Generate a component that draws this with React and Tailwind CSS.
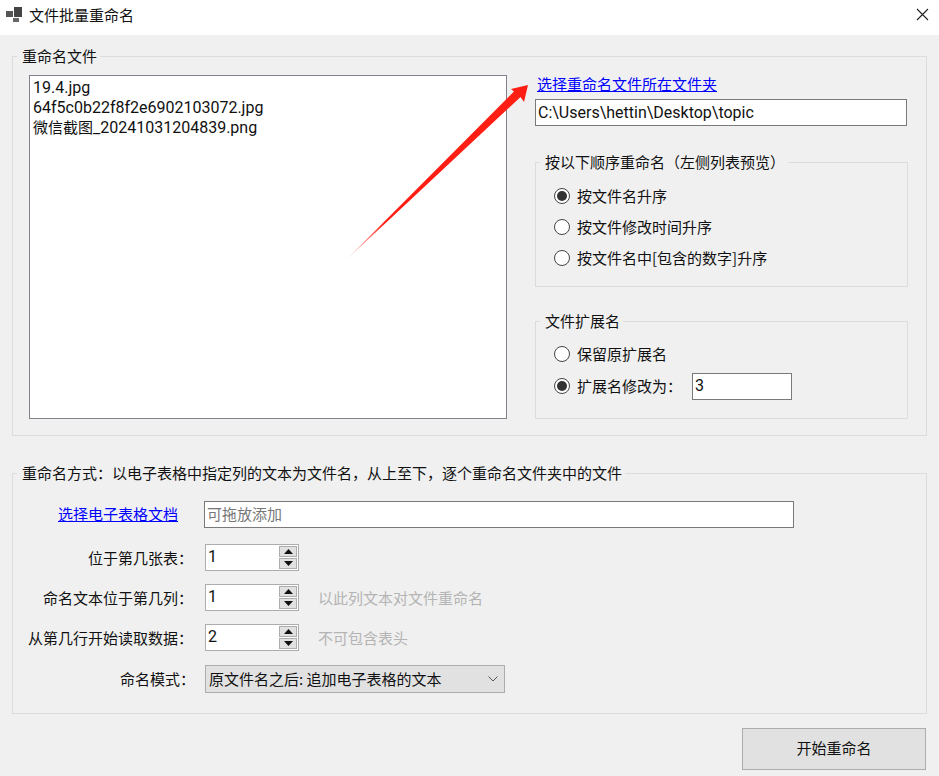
import React from 'react';

const FONT = '"Noto Sans CJK SC", sans-serif';
const LATIN = '"Roboto", "Noto Sans CJK SC", sans-serif';

const GroupBox = ({ title, className, children }) => (
  <div className={`relative border border-[#dcdcdc] ${className}`}>
    <span className="absolute left-[4px] top-[-11px] h-[20px] bg-[#f0f0f0] pl-[5px] pr-[3px] text-[15px] leading-[20px] text-[#111]">
      {title}
    </span>
    {children}
  </div>
);

const Radio = ({ label, checked }) => (
  <div className="flex h-[20px] items-center gap-[7px]">
    <span className="flex h-[16px] w-[16px] items-center justify-center rounded-full border border-[#444] bg-white">
      {checked && <span className="h-[10px] w-[10px] rounded-full bg-[#333]" />}
    </span>
    <span className="text-[15px] leading-[20px] text-[#111]">{label}</span>
  </div>
);

const SpinButton = ({ up }) => (
  <span className="flex h-[11px] w-[18px] items-center justify-center border border-[#adadad] bg-[#e1e1e1]">
    <svg width="9" height="5" viewBox="0 0 9 5">
      <path d={up ? 'M4.5 0L9 5H0Z' : 'M0 0H9L4.5 5Z'} fill="#111" />
    </svg>
  </span>
);

const Row = ({ label, value, hint, className }) => (
  <div className={`flex items-center ${className}`}>
    <span className="w-[180px] text-right text-[15px] leading-[20px] text-[#111]">{label}</span>
    <div className="ml-[12px] flex h-[27px] w-[94px] items-center justify-between border border-[#adadad] bg-white pl-[2px] pr-[1px]">
      <span className="pb-[2px] text-[16px] leading-[20px] text-[#111]" style={{ fontFamily: LATIN }}>{value}</span>
      <span className="flex flex-col gap-[1px]">
        <SpinButton up />
        <SpinButton />
      </span>
    </div>
    {hint && <span className="ml-[19px] text-[15px] leading-[20px] text-[#b4b4b4]">{hint}</span>}
  </div>
);

const App = () => {
  return (
    <div className="relative flex h-[776px] w-[939px] flex-col overflow-hidden bg-[#f0f0f0]" style={{ fontFamily: FONT }}>
      {/* Title bar */}
      <div className="flex h-[35px] shrink-0 items-center bg-white pb-[6px] pl-[6px] pr-[10px]">
        <svg width="17" height="15" viewBox="0 0 17 15">
          <rect x="8" y="0" width="8" height="10" fill="#444" />
          <rect x="0" y="4" width="7" height="6" fill="#555" />
          <rect x="7" y="11" width="6" height="4" fill="#666" />
        </svg>
        <span className="ml-[6px] text-[15px] leading-[20px] text-[#111]">文件批量重命名</span>
        <svg className="ml-auto" width="13" height="13" viewBox="0 0 13 13">
          <path d="M1 1L12 12M12 1L1 12" stroke="#222" strokeWidth="1.1" fill="none" />
        </svg>
      </div>

      {/* Files group */}
      <GroupBox title="重命名文件" className="mx-[12px] mt-[21px] flex h-[380px] w-[915px] shrink-0 gap-[28px] pl-[16px] pt-[18px]">
        <div className="h-[344px] w-[478px] border border-[#82828c] bg-white px-[3px] pt-[2px] text-[16px] leading-[20px] text-[#111]" style={{ fontFamily: LATIN }}>
          <div className="h-[20px]">19.4.jpg</div>
          <div className="h-[20px]">64f5c0b22f8f2e6902103072.jpg</div>
          <div className="h-[20px]"><span className="text-[15px]">微信截图</span>_20241031204839.png</div>
        </div>

        <div className="flex w-[373px] flex-col">
          <a className="ml-[2px] h-[18px] text-[15px] leading-[17px] text-[#0000ff] underline">选择重命名文件所在文件夹</a>
          <div className="mt-[6px] flex h-[27px] w-[372px] items-center border border-[#7a7a7a] bg-white pl-[2px] text-[16px] text-[#111]" style={{ fontFamily: LATIN }}>
            C:\Users\hettin\Desktop\topic
          </div>

          <GroupBox title="按以下顺序重命名（左侧列表预览）" className="mt-[36px] flex h-[125px] flex-col gap-[11px] pl-[18px] pt-[23px]">
            <Radio label="按文件名升序" checked />
            <Radio label="按文件修改时间升序" />
            <Radio label="按文件名中[包含的数字]升序" />
          </GroupBox>

          <GroupBox title="文件扩展名" className="mt-[34px] flex h-[98px] flex-col gap-[12px] pl-[18px] pt-[22px]">
            <Radio label="保留原扩展名" />
            <div className="flex h-[20px] items-center">
              <Radio label="扩展名修改为：" checked />
              <div className="ml-[10px] flex h-[27px] w-[100px] items-center border border-[#7a7a7a] bg-white pl-[2px] text-[16px] text-[#111]" style={{ fontFamily: LATIN }}>
                3
              </div>
            </div>
          </GroupBox>
        </div>
      </GroupBox>

      {/* Spreadsheet group */}
      <GroupBox title="重命名方式：以电子表格中指定列的文本为文件名，从上至下，逐个重命名文件夹中的文件" className="mx-[12px] mt-[37px] h-[241px] w-[915px] shrink-0 pt-[27px]">
        <div className="flex items-center">
          <a className="w-[165px] pb-[1px] text-right text-[15px] leading-[20px] text-[#0000ff] underline">选择电子表格文档</a>
          <div className="ml-[26px] flex h-[27px] w-[590px] items-center border border-[#7a7a7a] bg-white pb-[2px] pl-[2px] text-[15px] leading-[20px] text-[#777]">
            可拖放添加
          </div>
        </div>
        <Row label="位于第几张表：" value="1" className="mt-[16px]" />
        <Row label="命名文本位于第几列：" value="1" hint="以此列文本对文件重命名" className="mt-[13px]" />
        <Row label="从第几行开始读取数据：" value="2" hint="不可包含表头" className="mt-[13px]" />
        <div className="mt-[14px] flex items-center">
          <span className="w-[182px] text-right text-[15px] leading-[20px] text-[#111]">命名模式：</span>
          <div className="ml-[10px] flex h-[28px] w-[300px] items-center justify-between border border-[#adadad] bg-[#e1e1e1] pl-[3px] pr-[6px] text-[15px] text-[#111]">
            <span>原文件名之后: 追加电子表格的文本</span>
            <svg width="10" height="6" viewBox="0 0 10 6">
              <path d="M0.5 0.5L5 5L9.5 0.5" stroke="#555" fill="none" />
            </svg>
          </div>
        </div>
      </GroupBox>

      <div className="mr-[13px] mt-[14px] flex justify-end">
        <div className="flex h-[42px] w-[184px] items-center justify-center border border-[#adadad] bg-[#e1e1e1] pb-[2px] text-[15px] text-[#111]">
          开始重命名
        </div>
      </div>

      {/* Annotation arrow drawn over the window */}
      <svg className="pointer-events-none absolute left-0 top-0" width="939" height="776" viewBox="0 0 939 776">
        <defs>
          <linearGradient id="arrowFade" gradientUnits="userSpaceOnUse" x1="344" y1="262" x2="385" y2="223">
            <stop offset="0" stopColor="#ff1e14" stopOpacity="0" />
            <stop offset="1" stopColor="#ff1e14" />
          </linearGradient>
        </defs>
        <path d="M344 262L514 91.5L511 89L528 85L524 102L520.5 97Z" fill="url(#arrowFade)" />
      </svg>
    </div>
  );
};

export default App;
